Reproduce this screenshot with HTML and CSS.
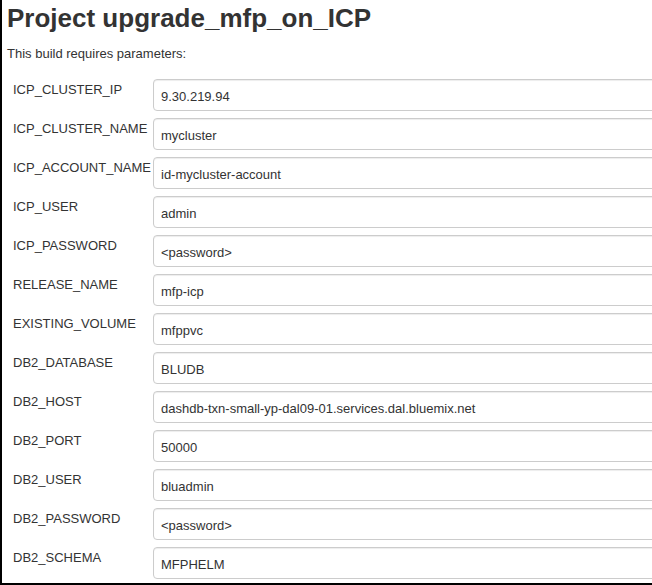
FILE: index.html
```html
<!DOCTYPE html>
<html>
<head>
<meta charset="utf-8">
<link rel="stylesheet" href="styles.css">
</head>
<body>
<div class="page">
  <h1 class="title">Project upgrade_mfp_on_ICP</h1>
  <p class="desc">This build requires parameters:</p>
  <div class="params">
    <div class="row"><div class="label">ICP_CLUSTER_IP</div><div class="field"><input class="input" type="text" value="9.30.219.94"></div></div>
    <div class="row"><div class="label">ICP_CLUSTER_NAME</div><div class="field"><input class="input" type="text" value="mycluster"></div></div>
    <div class="row"><div class="label">ICP_ACCOUNT_NAME</div><div class="field"><input class="input" type="text" value="id-mycluster-account"></div></div>
    <div class="row"><div class="label">ICP_USER</div><div class="field"><input class="input" type="text" value="admin"></div></div>
    <div class="row"><div class="label">ICP_PASSWORD</div><div class="field"><input class="input" type="text" value="&lt;password&gt;"></div></div>
    <div class="row"><div class="label">RELEASE_NAME</div><div class="field"><input class="input" type="text" value="mfp-icp"></div></div>
    <div class="row"><div class="label">EXISTING_VOLUME</div><div class="field"><input class="input" type="text" value="mfppvc"></div></div>
    <div class="row"><div class="label">DB2_DATABASE</div><div class="field"><input class="input" type="text" value="BLUDB"></div></div>
    <div class="row"><div class="label">DB2_HOST</div><div class="field"><input class="input" type="text" value="dashdb-txn-small-yp-dal09-01.services.dal.bluemix.net"></div></div>
    <div class="row"><div class="label">DB2_PORT</div><div class="field"><input class="input" type="text" value="50000"></div></div>
    <div class="row"><div class="label">DB2_USER</div><div class="field"><input class="input" type="text" value="bluadmin"></div></div>
    <div class="row"><div class="label">DB2_PASSWORD</div><div class="field"><input class="input" type="text" value="&lt;password&gt;"></div></div>
    <div class="row"><div class="label">DB2_SCHEMA</div><div class="field"><input class="input" type="text" value="MFPHELM"></div></div>
  </div>
</div>
</body>
</html>
```
FILE: styles.css
```css
html, body {
  margin: 0;
  padding: 0;
  background: #fff;
}
body {
  font-family: "Liberation Sans", Arial, sans-serif;
  color: #333;
}
.page {
  box-sizing: border-box;
  height: 585px;
  overflow: hidden;
  border-left: 2px solid #000;
  border-bottom: 2px solid #000;
  padding-left: 5px;
}
.title {
  margin: 0;
  padding-top: 3px;
  font-size: 26px;
  line-height: 30px;
  font-weight: bold;
  color: #333;
}
.desc {
  margin: 13px 0 0 0;
  font-size: 13px;
  line-height: 15px;
}
.params {
  margin-top: 18px;
  padding-left: 6px;
  display: flex;
  flex-direction: column;
  gap: 7px;
}
.row {
  display: grid;
  grid-template-columns: 140px 520px;
}
.label {
  font-size: 13px;
  line-height: 15px;
  padding-top: 3px;
  white-space: nowrap;
}
.field {
  display: flex;
}
.input {
  box-sizing: border-box;
  width: 100%;
  height: 32px;
  margin: 0;
  padding: 2px 7px 0 7px;
  border: 1px solid #ccc;
  border-radius: 4px;
  box-shadow: inset 0 1px 1px rgba(0, 0, 0, 0.075);
  font-family: "Liberation Sans", Arial, sans-serif;
  font-size: 13px;
  color: #333;
  background: #fff;
  outline: none;
}
```
